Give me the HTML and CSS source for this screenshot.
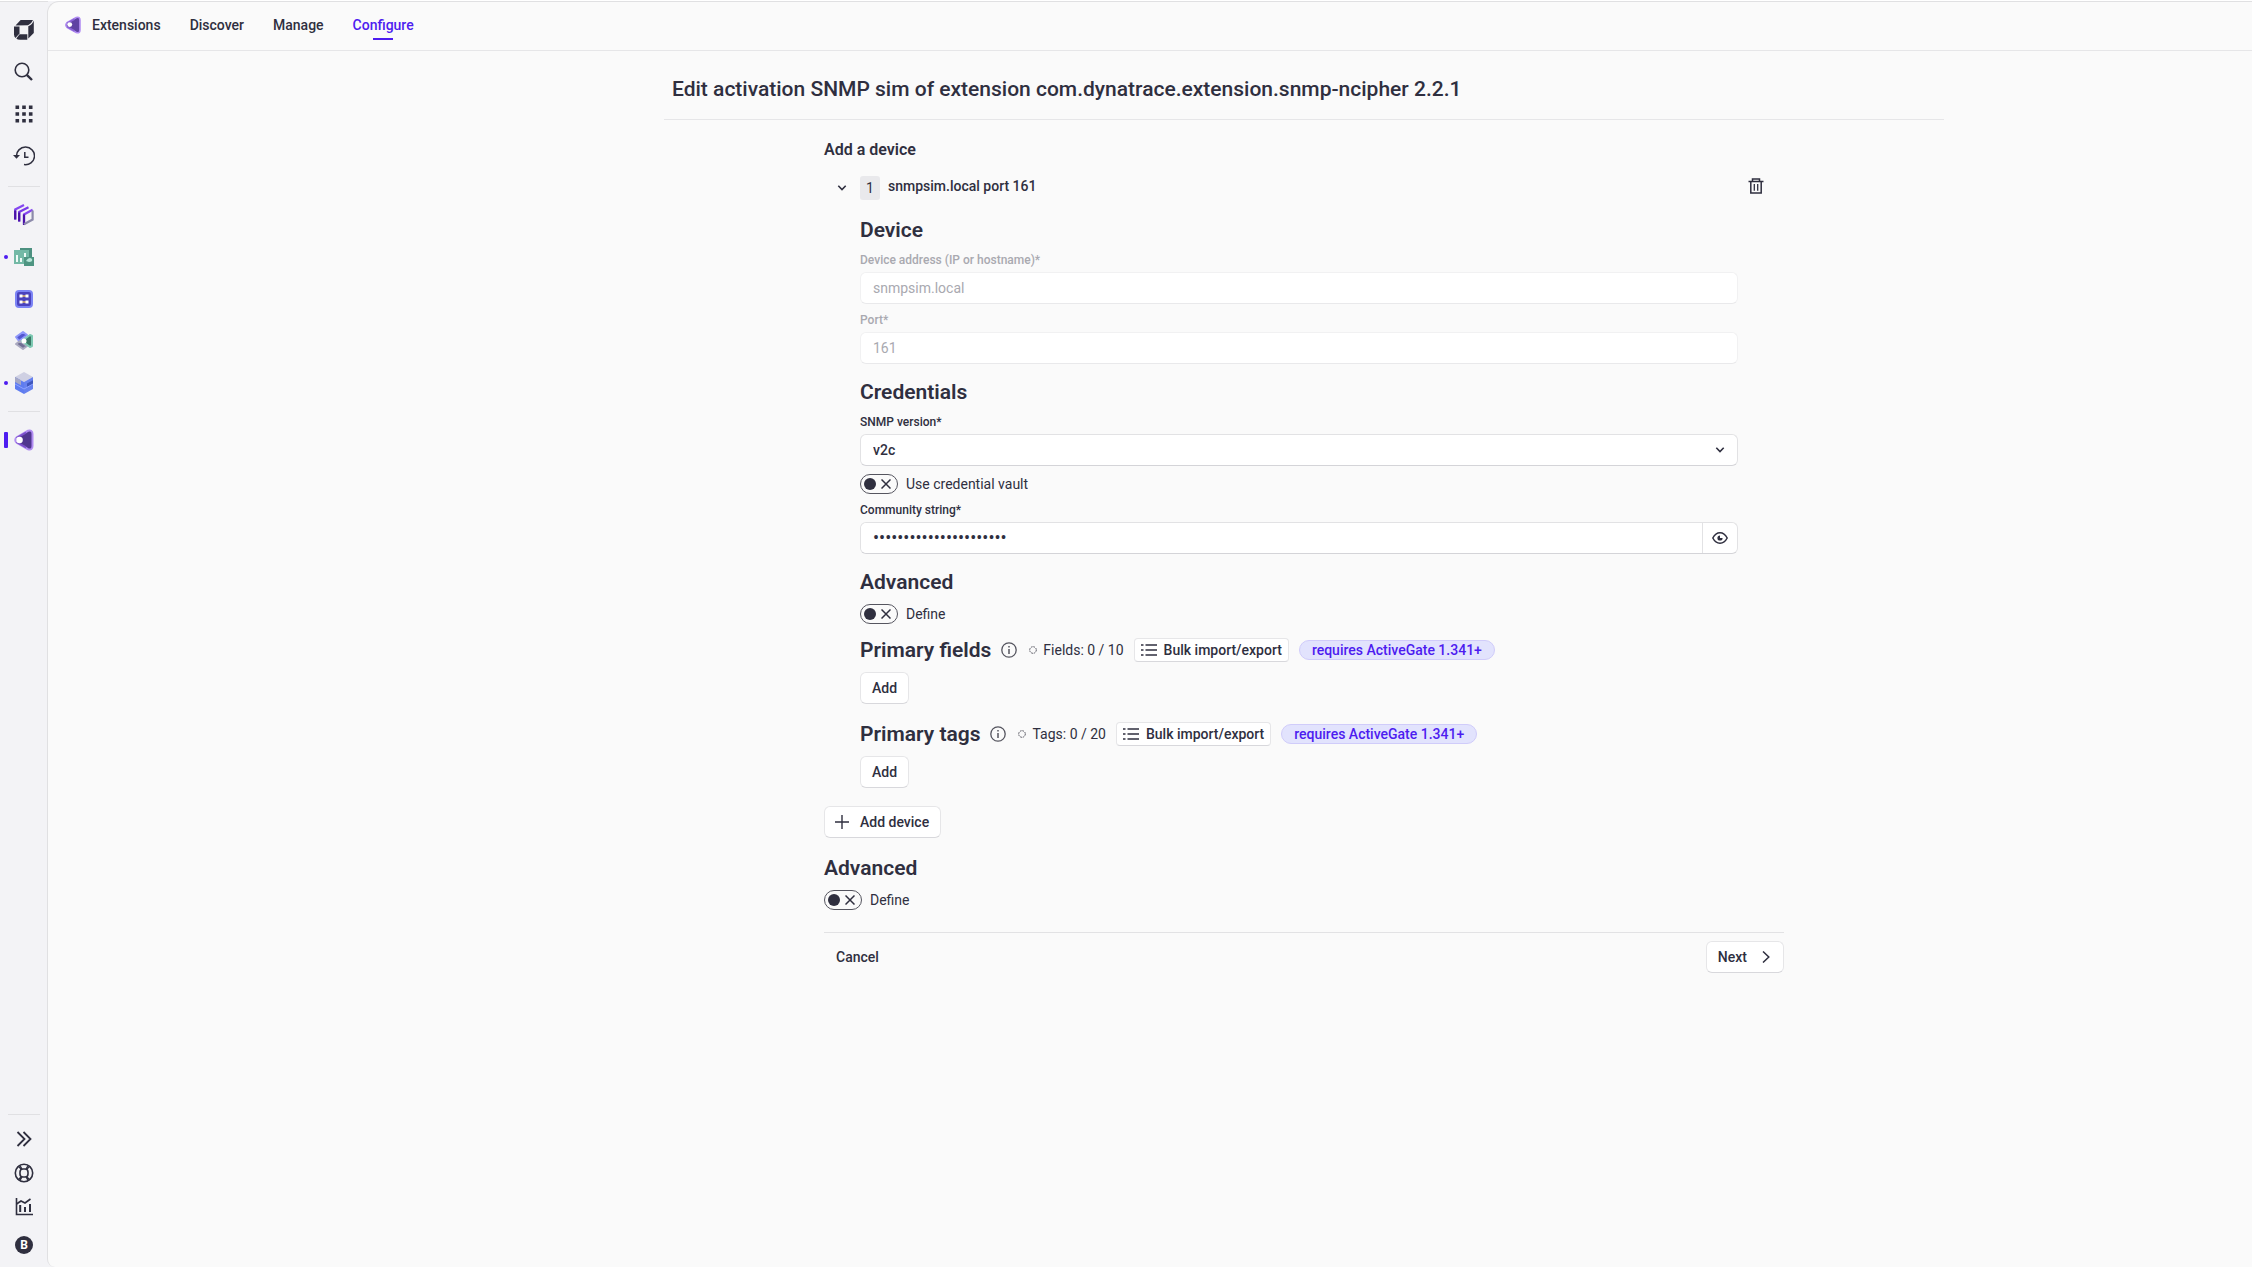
FILE: index.html
```
<!DOCTYPE html>
<html lang="en">
<head>
    <meta charset="UTF-8">
    <meta name="viewport" content="width=device-width, initial-scale=1.0">
    <title>Extensions - Configure</title>
    <link rel="stylesheet" href="styles.css">
</head>
<body>
    <aside class="dock">
        <div class="dock-group">
            <button type="button" class="dock-item" aria-label="Home">
                <svg width="22" height="22" viewBox="0 0 22 22" fill="#2f2f3f"><path d="M7.600 1 H20 Q18.500 4.800 15 6.200 L2.500 6.400 Z"/><path d="M20.800 1.600 V14 L15.300 19.500 V7.300 Q19.500 5.500 20.800 1.600 Z"/><path d="M1 7.500 L6.500 7.400 V14.500 L2.500 19 Q1 17.500 1 15.500 Z"/><path d="M6.600 15.300 H14.300 V20.700 H7 Q4.500 20.700 3.300 19.400 Z"/></svg>
            </button>
            <button type="button" class="dock-item" aria-label="Search">
                <svg width="20" height="20" viewBox="0 0 20 20" fill="none" stroke="#2f2f3f" stroke-width="1.600"><circle cx="8" cy="8" r="6.800"/><path d="M12.800 12.800 L18 18" stroke-width="2.400"/></svg>
            </button>
            <button type="button" class="dock-item" aria-label="Apps">
                <svg width="18" height="18" viewBox="0 0 18 18" fill="#2f2f3f"><path d="M0.500 0.500h3.600v3.600h-3.600zM7.200 0.500h3.600v3.600H7.200zM13.900 0.500h3.600v3.600h-3.600zM0.500 7.200h3.600v3.600h-3.600zM7.200 7.200h3.600v3.600H7.200zM13.900 7.200h3.600v3.600h-3.600zM0.500 13.900h3.600v3.600h-3.600zM7.200 13.900h3.600v3.600H7.200zM13.900 13.900h3.600v3.600h-3.600z"/></svg>
            </button>
            <button type="button" class="dock-item" aria-label="Recent">
                <svg width="22" height="20" viewBox="0 0 22 20" fill="none" stroke="#2f2f3f" stroke-width="1.500"><path d="M3.500 10.500 A9 8.800 0 1 1 11 18.600"/><path d="M11.800 6 V11.200 H15.500"/><path d="M0 9 H7 L3.500 12.800 Z" fill="#2f2f3f" stroke="none"/></svg>
            </button>
        </div>
        <hr class="dock-line">
        <div class="dock-group">
            <button type="button" class="dock-item" aria-label="Clusters">
                <svg width="20" height="22" viewBox="0 0 20 22" fill="none" stroke-width="2.200"><path d="M1.200 15.500 V5.500 L10 1" stroke="#8547f0"/><path d="M5.200 17.500 V8 L14.500 3.200" stroke="#7a3ae8"/><path d="M1.200 15.500 V6.500M5.200 17.500 V8.500" stroke="#4b12a8"/><path d="M10 20 V10.500 L18.600 5.800" stroke="#8547f0"/><path d="M10 21 V10.500" stroke="#4b12a8"/><path d="M10 20.200 L18.600 15.500 V6.500" stroke="#8d8bab"/></svg>
            </button>
            <button type="button" class="dock-item is-open" aria-label="Dashboards">
                <svg width="20" height="18" viewBox="0 0 20 18"><rect x="6" y="0" width="12" height="12" fill="#4c9080"/><rect x="0" y="2" width="15" height="14" fill="#73b9a6"/><path d="M2 7h2v7H2zM6 10h2v4H6zM10 5h2v9h-2z" fill="#effbf7"/><rect x="10" y="9" width="10" height="9" fill="#4e9582"/><path d="M12 13 Q15 8 18 11 Q19 14 15 14 Z" fill="#b9e6d9"/></svg>
            </button>
            <button type="button" class="dock-item" aria-label="Workflows">
                <svg width="18" height="18" viewBox="0 0 18 18"><rect x="1" y="1" width="16" height="16" rx="3" fill="#4a42bd" stroke="#7b83f5" stroke-width="2"/><path d="M5 6h8M5 12h8" stroke="#e2b96c" stroke-width="1.500"/><path d="M4.500 4.500h3v3h-3zM10.500 4.500h3v3h-3zM4.500 10.500h3v3h-3zM10.500 10.500h3v3h-3z" fill="#fff"/></svg>
            </button>
            <button type="button" class="dock-item" aria-label="Smartscape">
                <svg width="20" height="22" viewBox="0 0 20 22"><path d="M2 7 L9 2 L13 5 L5 11 Z" fill="#5256ce" stroke="#8d96fa" stroke-width="2" stroke-linejoin="round"/><path d="M2 14 L6 11 L13 16 L9 19 Z" fill="#706f94" stroke="#aaa9c0" stroke-width="2" stroke-linejoin="round"/><path d="M8 11 L16 5 L18 6 V16 L16 17 Z" fill="#397665" stroke="#7dc9b3" stroke-width="2" stroke-linejoin="round"/><circle cx="10" cy="11" r="2.500" fill="#fff"/></svg>
            </button>
            <button type="button" class="dock-item is-open" aria-label="Hub">
                <svg width="20" height="22" viewBox="0 0 20 22"><path d="M10 0 L19 5 L10 10 L1 5 Z" fill="#cfd0e3"/><path d="M1 5 L10 10 V22 L1 17 Z" fill="#5e7cf0"/><path d="M19 5 L10 10 V22 L19 17 Z" fill="#6681ee"/><path d="M1 5 L7 8.300 V13.300 L1 10 Z" fill="#a5a8c5"/><path d="M13 11.500 L19 8.300 V12 L13 15.200 Z" fill="#3f57bd"/><path d="M1 12 L10 17 L19 12" fill="none" stroke="#8da2ff"/></svg>
            </button>
        </div>
        <hr class="dock-line">
        <button type="button" class="dock-item is-active" aria-label="Extensions">
            <svg width="20" height="22" viewBox="0 0 20 22"><path d="M3 8 L14 1.800 Q18.500 0.500 18.500 5 V17 Q18.500 21.500 14 20.200 L3 14 Q-0.500 11 3 8 Z" fill="#50368f" stroke="#b18cf2" stroke-width="2"/><path d="M2.500 9 L12 3.600 M2.500 13 L12 18.400" stroke="#7b50ca" stroke-width="2"/><circle cx="5.500" cy="11" r="3.300" fill="#fff"/></svg>
        </button>

        <div class="dock-bottom">
            <hr class="dock-line">
            <button type="button" class="dock-item" aria-label="Expand">
                <svg width="16" height="16" viewBox="0 0 16 16" fill="none" stroke="#2f2f3f" stroke-width="1.800"><path d="M1.500 1 L8.500 8 L1.500 15M7.500 1 L14.500 8 L7.500 15"/></svg>
            </button>
            <button type="button" class="dock-item" aria-label="Support">
                <svg width="20" height="20" viewBox="0 0 20 20" fill="none" stroke="#2f2f3f" stroke-width="1.600"><circle cx="10" cy="10" r="8.700"/><rect x="6" y="6" width="8" height="8" rx="3"/><path d="M4 3 L7.500 6.500M6 2.500 L8 6M16 3 L12.500 6.500M14 2.500 L12 6M4 17 L7.500 13.500M6 17.500 L8 14M16 17 L12.500 13.500M14 17.500 L12 14" stroke-width="1.200"/></svg>
            </button>
            <button type="button" class="dock-item" aria-label="Usage">
                <svg width="18" height="18" viewBox="0 0 18 18" fill="none" stroke="#2f2f3f" stroke-width="1.600"><path d="M1.500 0 V16.500 H18"/><path d="M1.500 6 L6 3 L10 5 L15.500 1"/><path d="M5.200 7 V14M10 9 V14M15 6 V14" stroke-width="2"/></svg>
            </button>
            <button type="button" class="dock-item" aria-label="User menu"><span class="avatar">B</span></button>
        </div>
    </aside>

    <div class="app">
        <nav class="app-header">
            <a href="#" class="nav-link nav-home">
                <svg width="18" height="18" viewBox="0 0 20 22"><path d="M3 8 L14 1.800 Q18.500 0.500 18.500 5 V17 Q18.500 21.500 14 20.200 L3 14 Q-0.500 11 3 8 Z" fill="#5f42a3" stroke="#b18cf2" stroke-width="2"/><path d="M2.500 9 L12 3.600 M2.500 13 L12 18.400" stroke="#8a63d6" stroke-width="2"/><circle cx="6" cy="10.500" r="3" fill="#fff"/></svg>
                Extensions
            </a>
            <a href="#" class="nav-link">Discover</a>
            <a href="#" class="nav-link">Manage</a>
            <a href="#" class="nav-link active">Configure</a>
        </nav>

        <main class="page">
            <div class="page-inner">
                <h1>Edit activation SNMP sim of extension com.dynatrace.extension.snmp-ncipher 2.2.1</h1>

                <form class="wizard">
                    <h2 class="list-title">Add a device</h2>
                    <div class="device">
                        <div class="device-header">
                            <button type="button" class="icon-button toggle" aria-label="Collapse">
                                <svg width="10" height="8" viewBox="0 0 10 8" fill="none" stroke="#2f2f3f" stroke-width="1.600"><path d="M1.300 1.800 L5 5.500 L8.700 1.800"/></svg>
                            </button>
                            <span class="device-number">1</span>
                            <span class="device-name">snmpsim.local port 161</span>
                            <button type="button" class="icon-button" aria-label="Delete">
                                <svg width="16" height="16" viewBox="0 0 16 16" fill="none" stroke="#2f2f3f" stroke-width="1.500"><path d="M0.500 3.500 H15.500M4.500 3.500 V1 H11.500 V3.500M2.800 3.500 V15 H13.200 V3.500"/><path d="M6.300 6 V12.800M9.700 6 V12.800" stroke-width="1.300"/></svg>
                            </button>
                        </div>

                        <div class="device-body">
                            <section class="section">
                                <h3>Device</h3>
                                <div class="fields">
                                    <div class="field disabled">
                                        <label for="address">Device address (IP or hostname)*</label>
                                        <input type="text" id="address" value="snmpsim.local" disabled>
                                    </div>
                                    <div class="field disabled">
                                        <label for="port">Port*</label>
                                        <input type="text" id="port" value="161" disabled>
                                    </div>
                                </div>
                            </section>

                            <section class="section">
                                <h3>Credentials</h3>
                                <div class="fields">
                                    <div class="field">
                                        <label for="version">SNMP version*</label>
                                        <div class="select-box">
                                            <select id="version">
                                                <option>v2c</option>
                                            </select>
                                            <svg width="10" height="8" viewBox="0 0 10 8" fill="none" stroke="#2f2f3f" stroke-width="1.600"><path d="M1.300 1.800 L5 5.500 L8.700 1.800"/></svg>
                                        </div>
                                    </div>
                                    <label class="switch">
                                        <span class="switch-track">
                                            <input type="checkbox" role="switch">
                                            <svg width="10" height="10" viewBox="0 0 10 10" stroke="#2f2f3f" stroke-width="1.500"><path d="M0.500 0.500 L9.500 9.500M9.500 0.500 L0.500 9.500"/></svg>
                                        </span>
                                        Use credential vault
                                    </label>
                                    <div class="field">
                                        <label for="community">Community string*</label>
                                        <div class="password-box">
                                            <input type="password" id="community" value="aaaaaaaaaaaaaaaaaaaaaa">
                                            <button type="button" aria-label="Show value">
                                                <svg width="16" height="12" viewBox="0 0 16 12" fill="none" stroke="#2f2f3f" stroke-width="1.500"><path d="M0.800 6 Q3.500 0.800 8 0.800 T15.200 6 Q12.500 11.200 8 11.200 T0.800 6 Z"/><path d="M8 3.400 A2.600 2.600 0 1 0 10.600 6 H8 Z" fill="#2f2f3f" stroke="none"/></svg>
                                            </button>
                                        </div>
                                    </div>
                                </div>
                            </section>

                            <section class="section">
                                <h3>Advanced</h3>
                                <label class="switch">
                                    <span class="switch-track">
                                        <input type="checkbox" role="switch">
                                        <svg width="10" height="10" viewBox="0 0 10 10" stroke="#2f2f3f" stroke-width="1.500"><path d="M0.500 0.500 L9.500 9.500M9.500 0.500 L0.500 9.500"/></svg>
                                    </span>
                                    Define
                                </label>
                            </section>

                            <section class="section primary">
                                <div class="primary-header">
                                    <h3>Primary fields</h3>
                                    <svg class="info" width="16" height="16" viewBox="0 0 16 16" fill="none" stroke="#55555f" stroke-width="1.300"><circle cx="8" cy="8" r="7.200"/><path d="M8 7 V12M8 4 V5.500" stroke-width="1.500"/></svg>
                                    <span class="count">
                                        <svg width="8" height="8" viewBox="0 0 8 8" fill="none" stroke="#55555f"><circle cx="4" cy="4" r="3.300" stroke-dasharray="1.700 0.892"/></svg>
                                        Fields: 0 / 10
                                    </span>
                                    <button type="button" class="button button-small">
                                        <svg width="16" height="14" viewBox="0 0 16 14" fill="none" stroke="#2f2f3f" stroke-width="1.500"><path d="M0 2 H2.500M4.500 2 H16M0 7 H2.500M4.500 7 H16M0 12 H2.500M4.500 12 H16"/></svg>
                                        Bulk import/export
                                    </button>
                                    <span class="chip">requires ActiveGate 1.341+</span>
                                </div>
                                <button type="button" class="button">Add</button>
                            </section>

                            <section class="section primary">
                                <div class="primary-header">
                                    <h3>Primary tags</h3>
                                    <svg class="info" width="16" height="16" viewBox="0 0 16 16" fill="none" stroke="#55555f" stroke-width="1.300"><circle cx="8" cy="8" r="7.200"/><path d="M8 7 V12M8 4 V5.500" stroke-width="1.500"/></svg>
                                    <span class="count">
                                        <svg width="8" height="8" viewBox="0 0 8 8" fill="none" stroke="#55555f"><circle cx="4" cy="4" r="3.300" stroke-dasharray="1.700 0.892"/></svg>
                                        Tags: 0 / 20
                                    </span>
                                    <button type="button" class="button button-small">
                                        <svg width="16" height="14" viewBox="0 0 16 14" fill="none" stroke="#2f2f3f" stroke-width="1.500"><path d="M0 2 H2.500M4.500 2 H16M0 7 H2.500M4.500 7 H16M0 12 H2.500M4.500 12 H16"/></svg>
                                        Bulk import/export
                                    </button>
                                    <span class="chip">requires ActiveGate 1.341+</span>
                                </div>
                                <button type="button" class="button">Add</button>
                            </section>
                        </div>
                    </div>

                    <button type="button" class="button button-add">
                        <svg width="14" height="14" viewBox="0 0 14 14" stroke="#2f2f3f" stroke-width="1.400"><path d="M7 0 V14M0 7 H14"/></svg>
                        Add device
                    </button>

                    <section class="section">
                        <h3>Advanced</h3>
                        <label class="switch">
                            <span class="switch-track">
                                <input type="checkbox" role="switch">
                                <svg width="10" height="10" viewBox="0 0 10 10" stroke="#2f2f3f" stroke-width="1.500"><path d="M0.500 0.500 L9.500 9.500M9.500 0.500 L0.500 9.500"/></svg>
                            </span>
                            Define
                        </label>
                    </section>

                    <footer class="wizard-footer">
                        <button type="button" class="button button-plain">Cancel</button>
                        <button type="submit" class="button button-next">
                            Next
                            <svg width="8" height="12" viewBox="0 0 8 12" fill="none" stroke="#2f2f3f" stroke-width="1.500"><path d="M1 0.500 L6.800 6 L1 11.500"/></svg>
                        </button>
                    </footer>
                </form>
            </div>
        </main>
    </div>
</body>
</html>
```

FILE: styles.css
```
* {
    margin: 0;
    padding: 0;
    box-sizing: border-box;
}

body {
    display: flex;
    min-height: 100vh;
    border-top: 1px solid #fff;
    background-color: #f3f3f6;
    color: #2f2f3f;
    font-family: Roboto, 'Liberation Sans', sans-serif;
    font-size: 14px;
    line-height: 20px;
}

button,
input,
select {
    font: inherit;
    color: inherit;
}

button {
    border: none;
    background: none;
    cursor: pointer;
}

svg {
    display: block;
    flex: none;
}

/* Left dock */
.dock {
    display: flex;
    flex-direction: column;
    width: 48px;
    padding: 7px 0 1px;
    border-top: 1px solid #e0e0e2;
    flex: none;
}

.dock-item {
    position: relative;
    display: flex;
    align-items: center;
    justify-content: center;
    width: 100%;
    height: 42px;
}

.dock-line {
    height: 1px;
    margin: 9px 8px 7px;
    border: none;
    background-color: #e0e0e3;
}

.dock-line:nth-of-type(2) {
    margin: 7px 8px;
}

.is-open::before,
.is-active::before {
    content: '';
    position: absolute;
    left: 4px;
    width: 4px;
    height: 4px;
    border-radius: 2px;
    background-color: #4d1cf0;
}

.is-active::before {
    height: 16px;
    border-radius: 1px;
}

.dock-bottom {
    margin-top: auto;
}

.dock-bottom .dock-item {
    height: 34px;
}

.dock-bottom .dock-item:last-child {
    height: 42px;
}

.avatar {
    width: 18px;
    height: 18px;
    border-radius: 50%;
    background-color: #2f2f3f;
    color: #fff;
    font-size: 12px;
    font-weight: 700;
    line-height: 18px;
}

/* App area */
.app {
    flex: 1;
    min-width: 0;
    border: 1px solid #e0e0e2;
    border-width: 1px 0 0 1px;
    border-radius: 12px 0 0 8px;
    margin-left: -1px;
    background-color: #fafafa;
}

.app-header {
    display: flex;
    gap: 29px;
    height: 49px;
    padding: 0 16px;
    border-bottom: 1px solid #e6e6e8;
}

.nav-link {
    position: relative;
    display: flex;
    align-items: center;
    gap: 10px;
    height: 46px;
    color: #2f2f3f;
    font-weight: 500;
    text-decoration: none;
}

.nav-link.active {
    color: #4d1cf0;
}

.nav-link.active::after {
    content: '';
    position: absolute;
    left: 50%;
    bottom: 8px;
    width: 20px;
    height: 2px;
    margin-left: -10px;
    background-color: #4d1cf0;
}

.page {
    display: grid;
    grid-template-columns: 2fr minmax(0, 1280px) 1fr;
}

.page-inner {
    grid-column: 2;
}

h1 {
    padding: 26px 8px 18px;
    border-bottom: 1px solid #e6e6e8;
    font-size: 21px;
    font-weight: 500;
    line-height: 24px;
}

.wizard {
    max-width: 960px;
    margin: 20px auto 0;
}

.list-title {
    font-size: 16px;
    font-weight: 600;
    line-height: 20px;
}

h3 {
    font-size: 21px;
    font-weight: 600;
    line-height: 24px;
}

/* Device */
.device {
    margin: 16px 0 18px;
}

.device-header {
    display: flex;
    align-items: flex-start;
    padding-right: 18px;
}

.icon-button {
    display: flex;
    align-items: center;
    justify-content: center;
    width: 20px;
    height: 20px;
}

.icon-button.toggle {
    width: 36px;
    height: 24px;
}

.device-number {
    width: 20px;
    height: 24px;
    border-radius: 3px;
    background-color: #e9e9ec;
    line-height: 24px;
    text-align: center;
}

.device-name {
    flex: 1;
    padding-left: 8px;
    font-weight: 500;
}

.device-body {
    padding: 18px 46px 0 36px;
}

.section h3 {
    margin-bottom: 10px;
}

.section + .section {
    margin-top: 16px;
}

/* Form fields */
.fields {
    display: flex;
    flex-direction: column;
    gap: 8px;
}

.field {
    display: flex;
    flex-direction: column;
    gap: 4px;
}

.field label {
    font-size: 12px;
    font-weight: 500;
    line-height: 16px;
}

.field input,
.field select,
.password-box {
    width: 100%;
    height: 32px;
    padding: 0 12px 1px;
    border: 1px solid #e2e2e4;
    border-bottom-color: #d4d4d8;
    border-radius: 6px;
    background-color: #fff;
    outline: none;
}

.field.disabled label,
.field.disabled input {
    color: #a9a9b0;
}

.field.disabled input {
    border-color: #f1f1f2;
    border-bottom-color: #e9e9eb;
}

.select-box {
    display: grid;
    align-items: center;
}

.select-box select,
.select-box svg {
    grid-area: 1 / 1;
}

.select-box select {
    appearance: none;
    font-weight: 500;
}

.select-box svg {
    justify-self: end;
    margin-right: 13px;
    pointer-events: none;
}

.password-box {
    display: flex;
    padding: 0;
}

.password-box input {
    height: 100%;
    border: none;
    font-size: 18px;
}

.password-box button {
    display: flex;
    align-items: center;
    justify-content: center;
    width: 35px;
    border-left: 1px solid #e2e2e4;
    flex: none;
}

/* Switch */
.switch {
    display: flex;
    align-items: center;
    gap: 8px;
    width: fit-content;
}

.switch-track {
    display: flex;
    align-items: center;
    gap: 5px;
    width: 38px;
    height: 20px;
    padding: 0 3px;
    border: 1px solid #55555f;
    border-radius: 10px;
}

.switch input {
    appearance: none;
    width: 12px;
    height: 12px;
    border-radius: 50%;
    background-color: #2f2f3f;
}

/* Buttons */
.button {
    display: flex;
    align-items: center;
    height: 32px;
    padding: 0 11px;
    border: 1px solid #e6e6e8;
    border-bottom-color: #d8d8dc;
    border-radius: 6px;
    background-color: #fff;
    font-weight: 500;
}

.button-small {
    gap: 7px;
    height: 24px;
    padding: 0 6px;
    border-radius: 4px;
}

.button-add {
    gap: 11px;
    margin-bottom: 18px;
    padding-left: 10px;
}

.button-next {
    gap: 15px;
    padding-right: 13px;
}

.button-plain {
    border-color: transparent;
    background: none;
}

/* Primary fields and tags */
.section + .primary {
    margin-top: 12px;
}

.primary + .primary {
    margin-top: 16px;
}

.primary-header {
    display: flex;
    align-items: center;
    gap: 10px;
    height: 28px;
    margin-bottom: 8px;
}

.primary-header h3 {
    margin-bottom: 0;
}

.count {
    display: flex;
    align-items: center;
    gap: 6px;
    margin-left: 2px;
}

.chip {
    height: 20px;
    padding: 0 12px;
    border: 1px solid #d0ccfa;
    border-radius: 10px;
    background-color: #e2e3fd;
    color: #4d1cf0;
    font-weight: 500;
    line-height: 18px;
}

.wizard-footer {
    display: flex;
    justify-content: space-between;
    margin-top: 22px;
    padding-top: 8px;
    border-top: 1px solid #e2e2e4;
}
```
